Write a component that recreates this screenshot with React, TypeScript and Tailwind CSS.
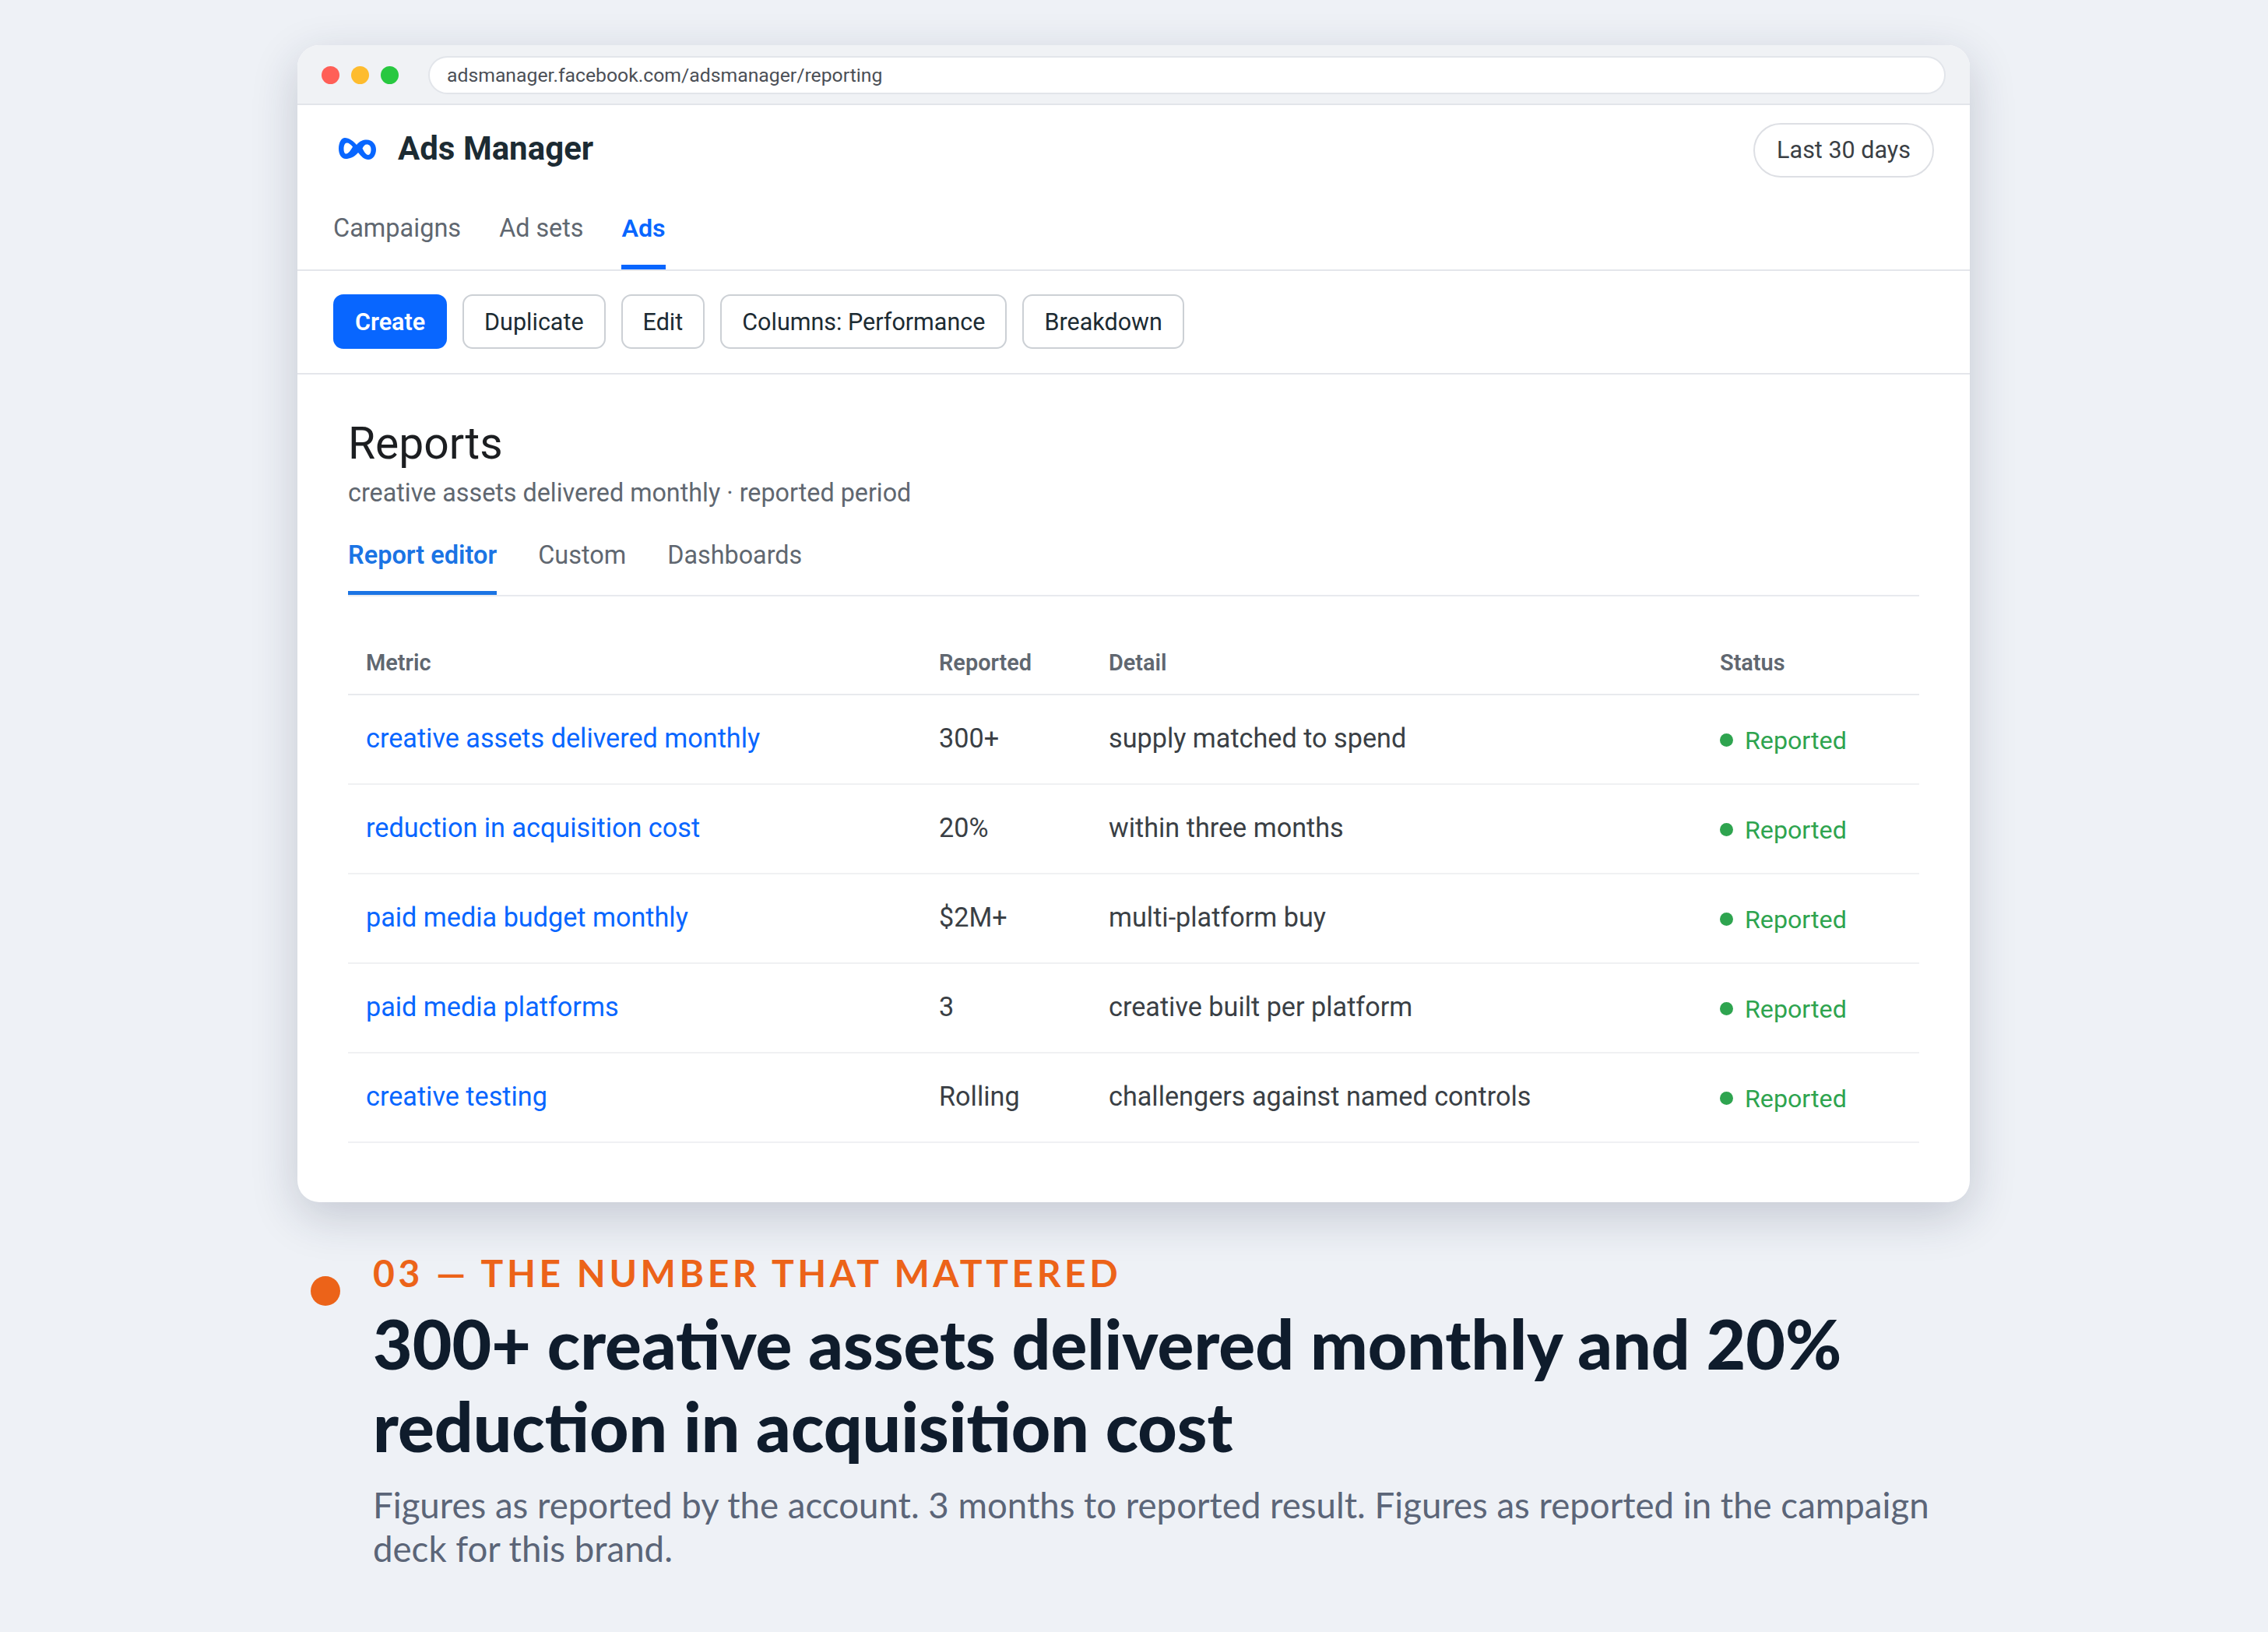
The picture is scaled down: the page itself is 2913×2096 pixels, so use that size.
import { ReactNode } from "react";

const rows = [
  { metric: "creative assets delivered monthly", value: "300+", detail: "supply matched to spend" },
  { metric: "reduction in acquisition cost", value: "20%", detail: "within three months" },
  { metric: "paid media budget monthly", value: "$2M+", detail: "multi-platform buy" },
  { metric: "paid media platforms", value: "3", detail: "creative built per platform" },
  { metric: "creative testing", value: "Rolling", detail: "challengers against named controls" },
];

const MetaLogo = () => (
  <svg width="48" height="28" viewBox="0 0 48 28" className="shrink-0">
    <path
      fill="#0866ff"
      fillRule="evenodd"
      d="M8 0C13 0 19 4 23 9C27 4 31 2.500 36 2.500C43 2.500 48 8 48 15C48 22 44 28 38 28C33 28 29 24 25 19C20 25 14 27 9 27C3.500 27 0 21 0 14C0 6 3.500 0 8 0ZM10.500 6.500C8 6.500 6.500 10 6.500 14C6.500 18 7.500 20.500 9.500 20.500C12.500 20.500 15.500 16 18 11.500C15.500 8.500 13 6.500 10.500 6.500ZM36 8.500C33.500 8.500 32 10.500 30.500 13.500C32.500 17.500 35 22 38 22C40 22 41.500 19 41.500 15C41.500 11 39.500 8.500 36 8.500Z"
    />
  </svg>
);

const Button = ({ children, primary }: { children: ReactNode; primary?: boolean }) => (
  <button
    className={
      primary
        ? "h-[70px] rounded-[13px] bg-[#0866ff] px-[28px] pt-[1px] text-[30.500px] font-semibold text-white"
        : "h-[70px] rounded-[13px] border-2 border-[#ccd0d5] bg-white px-[26px] pt-[1px] text-[30.500px] text-[#1c2b33]"
    }
  >
    {children}
  </button>
);

export default function App() {
  return (
    <div className="flex min-h-[2096px] w-full flex-col bg-[#eef1f6] pl-[382px] pr-[383px] pt-[58px] font-['Roboto',sans-serif]">
      <div className="h-[1486px] overflow-hidden rounded-[28px] bg-white shadow-[0_18px_60px_rgba(30,40,70,0.2)]">
        {/* browser chrome */}
        <div className="flex h-[77px] items-center border-b-2 border-[#e2e5ea] bg-[#f0f2f5] pl-[31px] pr-[31px] pt-[2px]">
          <div className="flex gap-[15px]">
            <span className="size-[23px] rounded-full bg-[#ff5f57]" />
            <span className="size-[23px] rounded-full bg-[#febc2e]" />
            <span className="size-[23px] rounded-full bg-[#28c840]" />
          </div>
          <div className="ml-[38px] flex h-[49px] flex-1 items-center rounded-full border-2 border-[#e2e5ea] bg-white pl-[22px] text-[24.750px] text-[#4b4f56]">
            adsmanager.facebook.com/adsmanager/reporting
          </div>
        </div>

        {/* app header */}
        <div className="flex items-start justify-between pl-[53px] pr-[46px] pt-[23px]">
          <div className="flex items-center gap-[28px] pt-[8px]">
            <MetaLogo />
            <span className="text-[42px] font-bold leading-[50px] text-[#1c2b33]">Ads Manager</span>
          </div>
          <div className="flex h-[70px] items-center rounded-full border-2 border-[#dddfe4] px-[28px] text-[30.500px] text-[#3a3f45]">
            Last 30 days
          </div>
        </div>

        <div className="flex h-[120px] gap-[49px] border-b-2 border-[#e4e6eb] pl-[46px] pt-[45px]">
          <div className="h-[73px] text-[32.500px] leading-[40px] text-[#606770]">Campaigns</div>
          <div className="h-[73px] text-[32.300px] leading-[40px] text-[#606770]">Ad sets</div>
          <div className="h-[73px] border-b-[6px] border-[#0866ff] text-[32.200px] font-semibold leading-[40px] text-[#0866ff]">
            Ads
          </div>
        </div>

        {/* toolbar */}
        <div className="flex h-[133px] items-start gap-[20px] border-b-2 border-[#e4e6eb] pl-[46px] pt-[30px]">
          <Button primary>Create</Button>
          <Button>Duplicate</Button>
          <Button>Edit</Button>
          <Button>Columns: Performance</Button>
          <Button>Breakdown</Button>
        </div>

        {/* report body */}
        <div className="pl-[65px] pr-[65px] pt-[54px]">
          <h1 className="text-[57px] font-normal leading-[70px] text-[#1c1e21]">Reports</h1>
          <p className="mt-[8px] text-[32.300px] leading-[40px] text-[#606770]">
            creative assets delivered monthly · reported period
          </p>
          <div className="mt-[32px] flex h-[81px] gap-[53px] border-b-2 border-[#e8eaee]">
            <div className="h-[79px] border-b-[5px] border-[#1b74e4] text-[32.500px] font-semibold leading-[56px] text-[#1b74e4]">
              Report editor
            </div>
            <div className="text-[32.500px] leading-[56px] text-[#606770]">Custom</div>
            <div className="text-[32.300px] leading-[56px] text-[#606770]">Dashboards</div>
          </div>

          <div className="mt-[49px]">
            <div className="grid h-[78px] grid-cols-[736px_218px_785px_1fr] items-center border-b-2 border-[#e8eaee] pb-[2px] text-[28.900px] font-semibold text-[#606770]">
              <div className="pl-[23px]">Metric</div>
              <div className="pl-[23px]">Reported</div>
              <div className="pl-[23px]">Detail</div>
              <div className="pl-[23px]">Status</div>
            </div>
            {rows.map((row) => (
              <div
                key={row.metric}
                className="grid h-[115px] grid-cols-[736px_218px_785px_1fr] items-center border-b-2 border-[#f0f1f3] text-[34.200px]"
              >
                <div className="pb-[2px] pl-[23px] text-[#0866ff]">{row.metric}</div>
                <div className="pb-[2px] pl-[23px] text-[#3a3f45]">{row.value}</div>
                <div className="pb-[2px] pl-[23px] text-[#3a3f45]">{row.detail}</div>
                <div className="flex items-center gap-[15px] pl-[23px] pt-[3px] text-[32.200px] text-[#2ea44f]">
                  <span className="size-[17px] rounded-full bg-[#2ea44f]" />
                  Reported
                </div>
              </div>
            ))}
          </div>
        </div>
      </div>

      {/* caption */}
      <div className="mt-[58px] flex gap-[42px] pl-[17px] pr-[20px] font-['Lato',sans-serif]">
        <span className="mt-[37px] size-[38px] shrink-0 rounded-full bg-[#ec6319]" />
        <div className="min-w-0">
          <div className="text-[48px] font-bold uppercase leading-[66px] tracking-[4.550px] text-[#ec6319]">
            03 — The number that mattered
          </div>
          <h2 className="mt-[5px] text-[87.500px] font-black leading-[106px] text-[#0f1c2c]">
            300+ creative assets delivered monthly and 20% reduction in acquisition cost
          </h2>
          <p className="mt-[20px] text-[45.600px] leading-[56px] text-[#5b6578]">
            Figures as reported by the account. 3 months to reported result. Figures as reported in the campaign deck
            for this brand.
          </p>
        </div>
      </div>
    </div>
  );
}
